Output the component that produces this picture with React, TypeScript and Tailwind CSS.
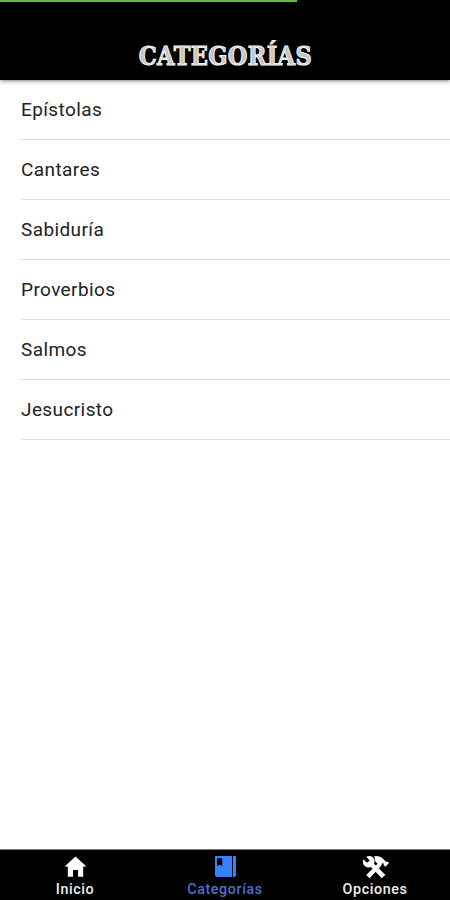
import React, { useState } from 'react';
import { IoMdHome } from 'react-icons/io';

const categories = ['Epístolas', 'Cantares', 'Sabiduría', 'Proverbios', 'Salmos', 'Jesucristo'];

// closed book with a small bookmark and the page edge on the right
const BookIcon: React.FC = () => (
  <svg width="21" height="21" viewBox="0 0 21 21" fill="currentColor">
    <path fillRule="evenodd" d="M1 0H17V21H2A2 2 0 0 1 0 19V1A1 1 0 0 1 1 0ZM2 2.2V10L4.6 8.8L7.2 10V2.2Z" />
    <path d="M18 0H20A1 1 0 0 1 21 1V19A2 2 0 0 1 19 21H18Z" />
  </svg>
);

// wrench and hammer crossed
const ToolsIcon: React.FC = () => (
  <svg width="27" height="24" viewBox="0 0 27 24" fill="currentColor">
    <path d="M1.2 4.2L5 7.8L7.7 5.4L4.2 1.7C7.5.2 11.3 1.2 12.3 4.5C12.8 6.2 12.6 7.5 12 8.8L23.3 19.7L19.8 23.3L9 12C5.8 13.5 2.5 12 1.3 9C.7 7.3.7 5.7 1.2 4.2Z" />
    <path d="M4.2 20.1L15.6 8.7L13.2 6.3L12.4 1.2C15.9.8 19 1.8 21.5 4.2L24.3 7L25.5 6.5L27 8L23.4 11.7L21.5 10L21.9 8.8L20.5 8L18.8 11.2L7.7 23.3Z" />
  </svg>
);

const tabs = [
  { id: 'home', label: 'Inicio', icon: <IoMdHome size={27} /> },
  { id: 'categories', label: 'Categorías', icon: <BookIcon /> },
  { id: 'options', label: 'Opciones', icon: <ToolsIcon /> },
];

const App: React.FC = () => {
  const [tab, setTab] = useState('categories');

  return (
    <div className="flex h-[900px] w-[450px] flex-col overflow-hidden bg-white font-[Roboto,sans-serif]">
      <header className="z-10 h-20 shrink-0 bg-black shadow-[0_1px_4px_rgba(0,0,0,0.5)]">
        <div className="h-[2px] w-[297px] bg-[#66bb38]" />
        <h1 className="mt-[38px] scale-x-[0.865] pl-px text-center font-['DejaVu_Serif',serif] text-[26px] leading-8 font-bold tracking-[0.4px] text-[#c4c4c4] [-webkit-text-stroke:1.1px_#f4f4f4]">
          CATEGORÍAS
        </h1>
      </header>

      <main className="flex-1 bg-white pl-[21px]">
        <ul>
          {categories.map((category) => (
            <li key={category} className="flex h-[60px] items-center border-b border-[#dedede] pt-[2px] text-[19px] tracking-[0.4px] text-[#222222]">
              {category}
            </li>
          ))}
        </ul>
      </main>

      <nav className="grid h-[51px] shrink-0 grid-cols-3 border-t border-[#777777] bg-black">
        {tabs.map((t) => (
          <button
            key={t.id}
            onClick={() => setTab(t.id)}
            className={`flex flex-col items-center pt-[3px] ${tab === t.id ? 'text-[#3880ff]' : 'text-white'}`}
          >
            <span className="flex h-[28px] items-center justify-center pb-px">{t.icon}</span>
            <span className={`text-[14.3px] leading-4 font-medium tracking-[0.6px] ${tab === t.id ? 'text-[#4b70cf]' : 'text-[#eeeeee]'}`}>
              {t.label}
            </span>
          </button>
        ))}
      </nav>
    </div>
  );
};

export default App;
